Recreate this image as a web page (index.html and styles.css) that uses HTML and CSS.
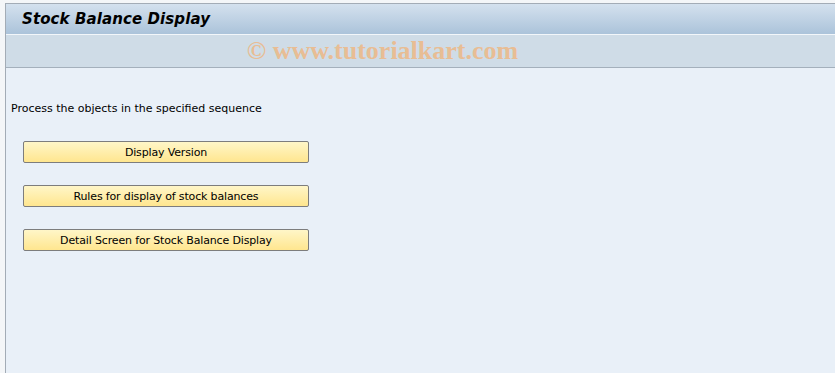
FILE: index.html
```html
<!DOCTYPE html>
<html lang="en">
<head>
    <meta charset="UTF-8">
    <title>Stock Balance Display</title>
    <link rel="stylesheet" href="styles.css">
</head>
<body>
    <div class="frame">
        <div class="title-bar">
            <h1>Stock Balance Display</h1>
        </div>
        <div class="toolbar">
            <span class="watermark">© www.tutorialkart.com</span>
        </div>
        <div class="content">
            <p class="hint">Process the objects in the specified sequence</p>
            <div class="buttons">
                <button class="step-btn">Display Version</button>
                <button class="step-btn">Rules for display of stock balances</button>
                <button class="step-btn">Detail Screen for Stock Balance Display</button>
            </div>
        </div>
    </div>
</body>
</html>
```

FILE: styles.css
```css
html, body {
    height: 100%;
}

body {
    margin: 0;
    background-color: #f4f6f8;
    font-family: 'DejaVu Sans', 'Liberation Sans', sans-serif;
    color: #000000;
}

.frame {
    margin: 3px 0 0 5px;
    height: calc(100% - 3px);
    box-sizing: border-box;
    border-top: 1px solid #a3acb6;
    border-left: 1px solid #a3acb6;
    background-color: #e9f0f8;
    display: flex;
    flex-direction: column;
}

.title-bar {
    height: 30px;
    background: linear-gradient(#d4e1ee, #abc3da);
    border-bottom: 1px solid #f2f6fa;
    display: flex;
    align-items: center;
    padding-left: 16px;
}

h1 {
    margin: 0;
    font-size: 15px;
    font-style: italic;
    font-weight: bold;
    letter-spacing: 0.1px;
}

.toolbar {
    height: 32px;
    background-color: #cfdce7;
    border-bottom: 1px solid #a4b0bc;
    display: flex;
    align-items: center;
    justify-content: center;
    padding-right: 76px;
}

.watermark {
    font-family: 'Liberation Serif', serif;
    font-weight: bold;
    font-size: 26px;
    color: #e8bd94;
}

.content {
    flex: 1;
    padding: 34px 0 0 5px;
}

.hint {
    margin: 0 0 26px 0;
    font-size: 11px;
}

.buttons {
    display: flex;
    flex-direction: column;
    gap: 22px;
    padding-left: 12px;
}

.step-btn {
    width: 286px;
    height: 22px;
    padding: 0;
    border: 1px solid #7d7d7d;
    border-radius: 2px;
    background: linear-gradient(#fff6c8, #ffe68f);
    font-family: 'DejaVu Sans', 'Liberation Sans', sans-serif;
    font-size: 11px;
    letter-spacing: -0.15px;
    color: #000000;
}
```
